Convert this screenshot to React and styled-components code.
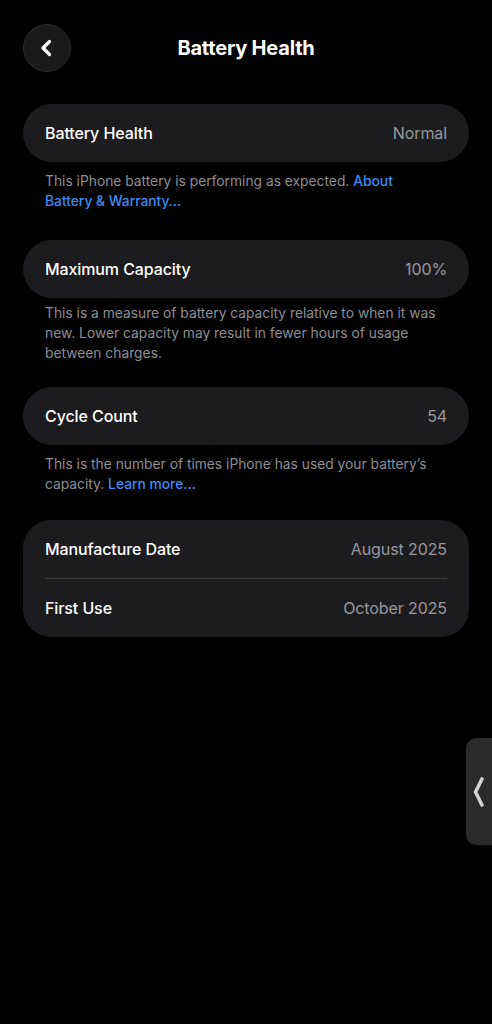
import React from "react";
import styled, { createGlobalStyle } from "styled-components";

const Global = createGlobalStyle`
  html, body { margin: 0; padding: 0; background: #000; }
  body { font-family: Inter, "Noto Sans", sans-serif; -webkit-font-smoothing: antialiased; }
`;

const Page = styled.div`
  position: relative;
  width: 492px;
  min-height: 1024px;
  background: #000;
  color: #fff;
  padding: 24px 23px 0;
  box-sizing: border-box;
`;

const Header = styled.header`
  position: relative;
  display: flex;
  align-items: center;
  justify-content: center;
  height: 48px;
  margin-bottom: 32px;
`;

const BackButton = styled.button`
  position: absolute;
  left: 0;
  top: 0;
  width: 48px;
  height: 48px;
  border-radius: 50%;
  background: #1a1a1b;
  border: 1px solid #2c2c2e;
  display: flex;
  align-items: center;
  justify-content: center;
  padding: 0;
  box-sizing: border-box;
`;

const Title = styled.h1`
  margin: 0;
  font-size: 20px;
  font-weight: 700;
  letter-spacing: -0.2px;
  color: #fff;
`;

const Card = styled.div`
  background: #1c1c1e;
  border-radius: ${(p) => (p.$multi ? "28px" : "29px")};
  padding: 0 22px;
  margin-top: ${(p) => p.$top || 0}px;
`;

const Row = styled.div`
  display: flex;
  align-items: center;
  justify-content: space-between;
  height: ${(p) => p.$h || 58}px;
  border-top: ${(p) => (p.$divider ? "1px solid #38383a" : "none")};
`;

const Label = styled.span`
  font-size: 16px;
  font-weight: 500;
  color: #fff;
  letter-spacing: -0.1px;
`;

const Value = styled.span`
  font-size: 16px;
  font-weight: 400;
  color: #98989d;
  letter-spacing: -0.1px;
`;

const Footer = styled.p`
  margin: ${(p) => p.$top || 9}px 0 0;
  padding: 0 26px 0 22px;
  font-size: 13.8px;
  line-height: 20px;
  color: #8e8e93;
  letter-spacing: 0;
`;

const Link = styled.a`
  color: #3b8cf5;
  font-weight: 500;
  text-decoration: none;
`;

const SideTab = styled.div`
  position: absolute;
  right: 0;
  top: 738px;
  width: 26px;
  height: 107px;
  background: #2a2a2c;
  border-radius: 10px 0 0 10px;
  display: flex;
  align-items: center;
  justify-content: flex-start;
  padding-left: 6px;
  box-sizing: border-box;
`;

function Chevron({ size = 20, color = "#fff", stroke = 3.2 }) {
  return (
    <svg width={size} height={size} viewBox="0 0 20 20" fill="none">
      <path d="M12.5 3.5 L6 10 L12.5 16.5" stroke={color} strokeWidth={stroke} strokeLinecap="round" strokeLinejoin="round" />
    </svg>
  );
}

function TallChevron() {
  return (
    <svg width="13" height="32" viewBox="0 0 13 32" fill="none">
      <path d="M10 3 L3.5 16 L10 29" stroke="#d2d2d4" strokeWidth="3.6" strokeLinecap="round" strokeLinejoin="round" />
    </svg>
  );
}

export default function App() {
  return (
    <Page>
      <Global />
      <Header>
        <BackButton aria-label="Back">
          <Chevron size={20} />
        </BackButton>
        <Title>Battery Health</Title>
      </Header>

      <Card>
        <Row>
          <Label>Battery Health</Label>
          <Value>Normal</Value>
        </Row>
      </Card>
      <Footer $top={9}>
        This iPhone battery is performing as expected. <Link>About Battery &amp; Warranty…</Link>
      </Footer>

      <Card $top={29}>
        <Row>
          <Label>Maximum Capacity</Label>
          <Value>100%</Value>
        </Row>
      </Card>
      <Footer $top={5}>
        This is a measure of battery capacity relative to when it was new. Lower capacity may result in fewer hours of usage between charges.
      </Footer>

      <Card $top={24}>
        <Row>
          <Label>Cycle Count</Label>
          <Value>54</Value>
        </Row>
      </Card>
      <Footer $top={9}>
        This is the number of times iPhone has used your battery’s capacity. <Link>Learn more…</Link>
      </Footer>

      <Card $top={26} $multi>
        <Row>
          <Label>Manufacture Date</Label>
          <Value>August 2025</Value>
        </Row>
        <Row $divider $h={58}>
          <Label>First Use</Label>
          <Value>October 2025</Value>
        </Row>
      </Card>

      <SideTab>
        <TallChevron />
      </SideTab>
    </Page>
  );
}
